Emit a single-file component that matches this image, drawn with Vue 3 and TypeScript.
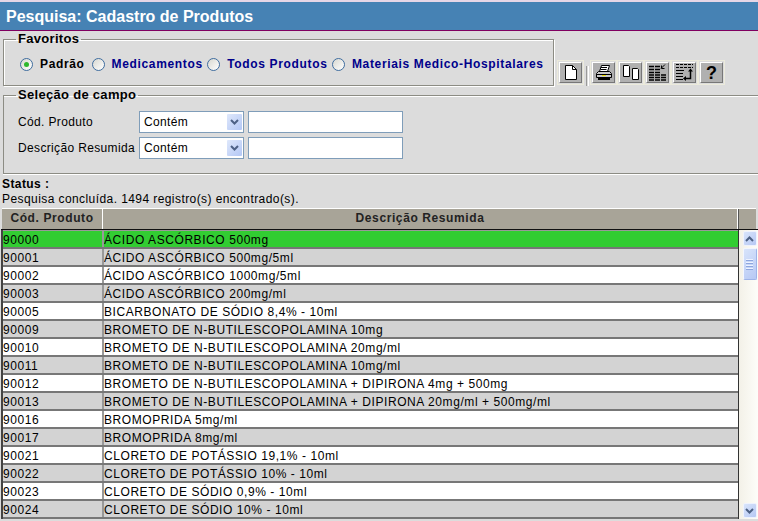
<script setup lang="ts">
const options = ['Medicamentos', 'Todos Produtos', 'Materiais Medico-Hospitalares']
const fields = ['Cód. Produto', 'Descrição Resumida']
const rows: [string, string][] = [
  ['90000', 'ÁCIDO ASCÓRBICO 500mg'],
  ['90001', 'ÁCIDO ASCÓRBICO 500mg/5ml'],
  ['90002', 'ÁCIDO ASCÓRBICO 1000mg/5ml'],
  ['90003', 'ÁCIDO ASCÓRBICO 200mg/ml'],
  ['90005', 'BICARBONATO DE SÓDIO 8,4% - 10ml'],
  ['90009', 'BROMETO DE N-BUTILESCOPOLAMINA 10mg'],
  ['90010', 'BROMETO DE N-BUTILESCOPOLAMINA 20mg/ml'],
  ['90011', 'BROMETO DE N-BUTILESCOPOLAMINA 10mg/ml'],
  ['90012', 'BROMETO DE N-BUTILESCOPOLAMINA + DIPIRONA 4mg + 500mg'],
  ['90013', 'BROMETO DE N-BUTILESCOPOLAMINA + DIPIRONA 20mg/ml + 500mg/ml'],
  ['90016', 'BROMOPRIDA 5mg/ml'],
  ['90017', 'BROMOPRIDA 8mg/ml'],
  ['90021', 'CLORETO DE POTÁSSIO 19,1% - 10ml'],
  ['90022', 'CLORETO DE POTÁSSIO 10% - 10ml'],
  ['90023', 'CLORETO DE SÓDIO 0,9% - 10ml'],
  ['90024', 'CLORETO DE SÓDIO 10% - 10ml'],
]
function rowClass(i: number): string {
  if (i === 0) return 'row selected'
  return i % 2 === 1 ? 'row odd' : 'row even'
}
</script>

<template>
  <div class="page">
    <header class="title">Pesquisa: Cadastro de Produtos</header>

    <div class="top">
      <fieldset class="fav">
        <legend>Favoritos</legend>
        <div class="radios">
          <span class="radio on"><i></i></span>
          <span class="label current">Padrão</span>
          <template v-for="o in options" :key="o">
            <span class="radio"></span>
            <span class="label link">{{ o }}</span>
          </template>
        </div>
      </fieldset>

      <div class="toolbar">
        <span class="tool">
          <button class="btn" aria-label="Novo">
            <svg width="12" height="15" viewBox="0 0 12 15"><path d="M.5.5h7l4 4v10h-11z" fill="#fff" stroke="#000"/><path d="M7.500.5v4h4" fill="none" stroke="#000"/></svg>
          </button>
        </span>
        <span class="sep"></span>
        <span class="tool">
          <button class="btn" aria-label="Imprimir">
            <svg width="16" height="15" viewBox="0 0 16 15"><path d="M5.500.5h8l-2 6h-8z" fill="#fff" stroke="#000"/><path d="M5 2.500h6M4.500 4.500h6" stroke="#000"/><path d="M2.500 6.500h11l2 2v4h-15v-4z" fill="#c8c8c8" stroke="#000"/><path d="M1 9.500h14" stroke="#000"/><path d="M6 10.500h4" stroke="#e8d800" stroke-width="1"/><path d="M2 12h12v3h-12z" fill="#000"/></svg>
          </button>
          <button class="btn" aria-label="Copiar">
            <svg width="16" height="15" viewBox="0 0 16 15"><path d="M.5.5h5l1 1v10h-6z" fill="#fff" stroke="#000"/><path d="M9.500 3.500h5l1 1v10h-6z" fill="#fff" stroke="#000"/></svg>
          </button>
          <button class="btn" aria-label="Selecionar colunas">
            <svg width="17" height="17" viewBox="0 0 17 17"><path d="M0 2.500h11M0 5.500h11M0 8.500h11M0 11h17M0 13.500h17M0 16h17" stroke="#000" stroke-width="1.500" stroke-dasharray="5 1"/><path d="M16 .5l-4 4M12.500 1.500v3h3" fill="none" stroke="#000"/></svg>
          </button>
          <button class="btn" aria-label="Ordenar">
            <svg width="17" height="17" viewBox="0 0 17 17"><path d="M0 .5h17M0 3.500h17" stroke="#000" stroke-dasharray="3 1"/><path d="M0 6.500h8M0 9.500h7M0 12.500h7M0 15.500h7" stroke="#000"/><path d="M14.500 7v7.500h-5" fill="none" stroke="#000" stroke-width="1.500"/><path d="M14.500 4.500l-2.500 3h5zM7 14.500l3-2.500v5z" fill="#000"/></svg>
          </button>
          <button class="btn help" aria-label="Ajuda">?</button>
        </span>
      </div>
    </div>

    <fieldset class="fields">
      <legend>Seleção de campo</legend>
      <div v-for="f in fields" :key="f" class="field">
        <span class="name">{{ f }}</span>
        <span class="select">
          <span class="value">Contém</span>
          <span class="arrow">
            <svg width="9" height="6" viewBox="0 0 9 6"><path d="M1 1l3.500 3.500L8 1" fill="none" stroke="#4d6185" stroke-width="2"/></svg>
          </span>
        </span>
        <span class="input"></span>
      </div>
    </fieldset>

    <div class="status">
      <strong>Status :</strong>
      <span>Pesquisa concluída. 1494 registro(s) encontrado(s).</span>
    </div>

    <div class="head">
      <div class="hcell code">Cód. Produto</div>
      <div class="hcell desc">Descrição Resumida</div>
      <div class="hcell end"></div>
    </div>

    <div class="body">
      <div class="list">
        <div v-for="(r, i) in rows" :key="r[0]" :class="rowClass(i)">
          <div class="cell code">{{ r[0] }}</div>
          <div class="cell desc">{{ r[1] }}</div>
        </div>
      </div>
      <div class="scroll">
        <span class="sbtn">
          <svg width="9" height="6" viewBox="0 0 9 6"><path d="M1 5l3.500-3.500L8 5" fill="none" stroke="#4d6185" stroke-width="2"/></svg>
        </span>
        <span class="thumb"><i></i><i></i><i></i><i></i></span>
        <span class="track"></span>
        <span class="sbtn">
          <svg width="9" height="6" viewBox="0 0 9 6"><path d="M1 1l3.500 3.500L8 1" fill="none" stroke="#4d6185" stroke-width="2"/></svg>
        </span>
      </div>
    </div>
  </div>
</template>

<style scoped>
.page {
  width: 758px;
  height: 521px;
  overflow: hidden;
  background: #dcdcdc;
  font-family: "Liberation Sans", Arial, sans-serif;
  font-size: 12px;
  letter-spacing: 0.42px;
  color: #000;
  border-top: 2px solid #e6d6e6;
  box-sizing: border-box;
}
.title {
  height: 29px;
  box-sizing: border-box;
  background: #4682b4;
  border-bottom: 1px solid #800060;
  color: #fff;
  font-size: 16px;
  font-weight: 700;
  line-height: 29px;
  padding-left: 6px;
  letter-spacing: 0;
}
.top {
  display: flex;
  align-items: flex-start;
  padding-left: 3px;
}
fieldset {
  margin: 0;
  padding: 0;
  box-sizing: border-box;
  border: 1px solid #8c8c84;
  box-shadow: 1px 1px 0 #fff, inset 1px 1px 0 #fff;
}
legend {
  margin-left: 12px;
  padding: 0 2px;
  font-size: 13px;
  font-weight: 700;
  line-height: 14px;
  letter-spacing: 0.3px;
}
.fav {
  width: 551px;
  height: 54px;
  margin-top: 1px;
}
.radios {
  display: flex;
  align-items: center;
  padding: 9px 0 0 16px;
  font-weight: 700;
  height: 18px;
  letter-spacing: 0.65px;
}
.radio {
  width: 13px;
  height: 13px;
  box-sizing: border-box;
  border: 1px solid #3f6d9f;
  border-radius: 50%;
  background: linear-gradient(135deg, #d8d8d0, #fff);
  display: flex;
  align-items: center;
  justify-content: center;
}
.radio i {
  width: 5px;
  height: 5px;
  border-radius: 50%;
  background: #2eb82e;
}
.label {
  margin: 0 4.5px 0 7px;
}
.current { margin-right: 7px; }
.link { color: #00008b; }
.toolbar {
  display: flex;
  align-items: flex-start;
  margin: 29px 0 0 3px;
}
.tool {
  display: flex;
}
.sep {
  width: 1px;
  height: 20px;
  margin: 6px 1px 0 2px;
  border-left: 1px solid #999;
  border-right: 1px solid #fff;
}
.btn {
  box-sizing: content-box;
  background: #b0b0b0;
  border: 1px solid;
  border-color: #fff #777 #777 #fff;
  box-shadow: 0 0 0 1px #dcdcdc, 0 0 0 2px #ecebdc;
  display: flex;
  align-items: center;
  justify-content: center;
  font-family: "Liberation Sans", Arial, sans-serif;
  width: 21px;
  height: 19px;
  margin: 2px;
  padding: 0;
  color: #000;
}
.help {
  font-size: 18px;
  font-weight: 700;
  line-height: 18px;
}
.fields {
  width: 755px;
  margin: 2px 0 0 3px;
  height: 86px;
  border-right: 0;
  box-shadow: inset 0 1px 0 #fff, 0 1px 0 #fff;
}
.field {
  display: flex;
  align-items: center;
  height: 22px;
  margin-bottom: 4px;
  padding-left: 14px;
  font-size: 12px;
  letter-spacing: 0.35px;
}
.fields .field:first-of-type { margin-top: 9px; }
.name { width: 121px; }
.select {
  width: 105px;
  height: 22px;
  box-sizing: border-box;
  border: 1px solid #7f9db9;
  background: #fff;
  display: flex;
  align-items: center;
  padding: 1px;
  padding-left: 4px;
}
.value { flex: 1; }
.arrow {
  width: 15px;
  height: 16px;
  background: linear-gradient(135deg, #dfe8fb, #b3c7f5);
  border-radius: 1px;
  display: flex;
  align-items: center;
  justify-content: center;
}
.input {
  width: 155px;
  height: 22px;
  margin-left: 4px;
  box-sizing: border-box;
  border: 1px solid #7f9db9;
  background: #fff;
}
.status {
  display: flex;
  flex-direction: column;
  padding-left: 2px;
  line-height: 15px;
  margin-top: 3px;
}
.head {
  display: flex;
  height: 21px;
  margin: 1px 2px 0 2px;
  background: #a8a498;
  font-weight: 700;
  color: #222;
  text-align: center;
  line-height: 19px;
  border-top: 1px solid #fff;
  box-sizing: border-box;
  letter-spacing: 0.6px;
}
.hcell.code { width: 100px; border-right: 1px solid #fff; box-sizing: content-box; }
.hcell.desc { width: 634px; border-right: 1px solid #fff; }
.hcell.end { flex: 1; border-left: 1px solid #555; }
.body {
  display: flex;
  margin-left: 1px;
  border-top: 1px solid #111;
  height: 289px;
}
.list {
  width: 735px;
  padding-top: 1px;
  background: #999;
  border-left: 2px solid #444;
  border-right: 1px solid #333;
  box-sizing: content-box;
  overflow: hidden;
}
.row {
  display: flex;
  height: 18px;
  box-sizing: border-box;
  border-bottom: 2px solid;
  border-color: #444 #444 #777;
  line-height: 19px;
  font-size: 12px;
  letter-spacing: 0.57px;
}
.row.selected { background: #32cd32; }
.row.odd { background: #d3d3d3; }
.row.even { background: #fff; }
.cell { height: 16px; white-space: nowrap; overflow: hidden; }
.cell.code { width: 99px; border-right: 2px solid #999; box-sizing: content-box; }
.cell.desc { flex: 1; }
.scroll {
  width: 19px;
  background: linear-gradient(90deg, #f3f1e8, #fdfdf9);
  display: flex;
  flex-direction: column;
  align-items: center;
  padding: 1px 0 1px 2px;
  box-sizing: border-box;
}
.sbtn, .thumb {
  width: 14px;
  box-sizing: border-box;
  border: 1px solid #eef2fe;
  border-radius: 2px;
  background: linear-gradient(135deg, #d8e4fb, #b6c8f4);
  display: flex;
  flex-direction: column;
  align-items: center;
  justify-content: center;
}
.sbtn { height: 15px; }
.thumb { height: 32px; margin-top: 2px; gap: 1px; border-color: #f3f6ff #9db3e8 #9db3e8 #f3f6ff; }
.thumb i { width: 7px; height: 1px; background: #edf2ff; box-shadow: 0 1px 0 #8ea6de; margin-bottom: 1px; }
.track { flex: 1; }
</style>
